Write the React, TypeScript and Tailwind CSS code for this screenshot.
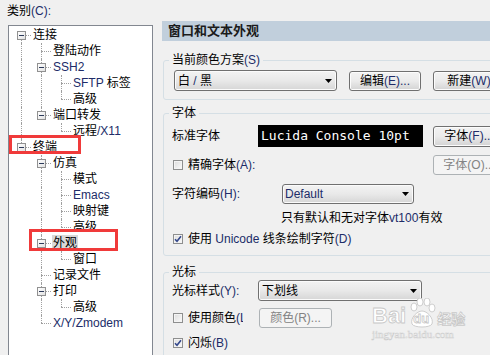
import React from "react";

type N = { label: React.ReactNode; children?: N[]; selected?: boolean };

const L = ({ children }: { children: React.ReactNode }) => (
  <span className="text-[#202c68]">{children}</span>
);

const tree: N[] = [
  {
    label: "连接",
    children: [
      { label: "登陆动作" },
      {
        label: <L>SSH2</L>,
        children: [
          {
            label: (
              <>
                <L>SFTP</L> 标签
              </>
            ),
          },
          { label: "高级" },
        ],
      },
      {
        label: "端口转发",
        children: [
          {
            label: (
              <>
                远程<L>/X11</L>
              </>
            ),
          },
        ],
      },
    ],
  },
  {
    label: "终端",
    children: [
      {
        label: "仿真",
        children: [
          { label: "模式" },
          { label: <L>Emacs</L> },
          { label: "映射键" },
          { label: "高级" },
        ],
      },
      { label: "外观", selected: true, children: [{ label: "窗口" }] },
      { label: "记录文件" },
      { label: "打印", children: [{ label: "高级" }] },
      { label: <L>X/Y/Zmodem</L> },
    ],
  },
];

type Row = { node: N; depth: number; last: boolean; ancLast: boolean[]; first: boolean };

function flat(nodes: N[], depth: number, ancLast: boolean[], out: Row[]) {
  nodes.forEach((n, i) => {
    const last = i === nodes.length - 1;
    out.push({ node: n, depth, last, ancLast, first: depth === 0 && i === 0 });
    if (n.children) flat(n.children, depth + 1, [...ancLast, last], out);
  });
  return out;
}

const rows = flat(tree, 0, [], []);

const dot = "border-dotted border-[#a0a0a0]";

function TreeRow({ r }: { r: Row }) {
  const has = !!r.node.children;
  return (
    <div className="flex h-4 items-center">
      {r.ancLast.map((al, i) => (
        <div key={i} className="relative h-4 w-5 shrink-0">
          {!al && <div className={`absolute left-[10px] top-0 h-4 border-l ${dot}`} />}
        </div>
      ))}
      <div className="relative h-4 w-5 shrink-0">
        {!r.first && <div className={`absolute left-[10px] top-0 h-[8px] border-l ${dot}`} />}
        {!r.last && <div className={`absolute left-[10px] top-[8px] h-[8px] border-l ${dot}`} />}
        <div className={`absolute left-[10px] top-[8px] w-[10px] border-t ${dot}`} />
        {has && (
          <div className="absolute left-[6px] top-[4px] flex h-[9px] w-[9px] items-center justify-center border border-[#919191] bg-linear-to-br from-white to-[#e2e2e2]">
            <div className="h-px w-[5px] bg-[#2c3a5a]" />
          </div>
        )}
      </div>
      <span
        className={`ml-[1px] whitespace-nowrap px-[1px] text-[12px] leading-4 text-black ${
          r.node.selected ? "bg-[#d9d9d9]" : ""
        }`}
      >
        {r.node.label}
      </span>
    </div>
  );
}

function Arrow() {
  return (
    <svg width="7" height="4" viewBox="0 0 7 4" className="shrink-0">
      <path d="M0 0H7L3.5 4Z" fill="#000" />
    </svg>
  );
}

function Combo({ w, text, pl = 3 }: { w: string; text: React.ReactNode; pl?: number }) {
  return (
    <div
      className={`${w} flex h-full items-center justify-between rounded-[3px] border border-[#707070] bg-linear-to-b from-[#f3f3f3] via-[#e9e9e9] to-[#d6d6d6] pr-[4px] shadow-[inset_0_0_0_1px_#fbfbfb] ${
        pl === 2 ? "pl-[2px]" : "pl-[3px]"
      }`}
    >
      <span className="text-[12px] leading-4 whitespace-nowrap">{text}</span>
      <Arrow />
    </div>
  );
}

function Btn({ children, disabled, w = "w-[72px]" }: { children: React.ReactNode; disabled?: boolean; w?: string }) {
  return disabled ? (
    <div
      className={`${w} flex h-full shrink-0 items-center justify-center rounded-[3px] border border-[#adb2b5] bg-[#f4f4f4] text-[12px] leading-4 whitespace-nowrap text-[#838383]`}
    >
      {children}
    </div>
  ) : (
    <div
      className={`${w} flex h-full shrink-0 items-center justify-center rounded-[3px] border border-[#707070] bg-linear-to-b from-[#f3f3f3] via-[#ebebeb] to-[#d3d3d3] text-[12px] leading-4 whitespace-nowrap shadow-[inset_0_0_0_1px_#fcfcfc]`}
    >
      {children}
    </div>
  );
}

function Check({ checked }: { checked?: boolean }) {
  return (
    <div className="relative h-[10px] w-[10px] shrink-0 border border-[#8e8f8f] bg-linear-to-br from-[#dcdcdc] to-[#fbfbfb] shadow-[inset_0_0_0_1px_#f4f4f4]">
      {checked && (
        <svg width="8" height="8" viewBox="0 0 8 8" className="absolute left-0 top-0">
          <path d="M1 4.2L3 6.3L7 1.2" fill="none" stroke="#34488c" strokeWidth="1.6" />
        </svg>
      )}
    </div>
  );
}

export default function App() {
  return (
    <div className="relative flex h-[355px] w-[490px] overflow-hidden bg-[#f0f0f0] text-black [font-family:'Liberation_Sans','Noto_Sans_CJK_SC',sans-serif]">
      {/* left column */}
      <div className="flex w-[162px] shrink-0 flex-col">
        <div className="pl-[7px] pt-[3px] text-[12px] leading-4">
          类别<L>(C):</L>
        </div>
        <div className="ml-[8px] mt-[6px] h-[340px] w-[145px] shrink-0 border border-[#828790] bg-white pl-[2px] pt-[1px]">
          {rows.map((r, i) => (
            <TreeRow key={i} r={r} />
          ))}
        </div>
      </div>

      {/* right column */}
      <div className="flex w-[345px] shrink-0 flex-col pt-[21px]">
        <div className="h-[20px] bg-[#c1cfdc] pl-[6px] text-[13px] font-bold leading-[20px] text-[#1b1b1b]">
          窗口和文本外观
        </div>

        {/* group 1 */}
        <fieldset className="ml-[1px] mt-[11px] min-w-0 rounded-[3px] border border-[#d5dfe5] pb-[8px] pl-[8px] pt-[2px]">
          <legend className="-ml-[3px] px-[3px] text-[12px] leading-4">
            当前颜色方案<L>(S)</L>
          </legend>
          <div className="flex h-[21px] items-center">
            <div className="ml-[2px] h-[21px]">
              <Combo
                w="w-[163px]"
                text={
                  <>
                    白 <L>/</L> 黑
                  </>
                }
              />
            </div>
            <div className="ml-[12px] h-[20px]">
              <Btn>
                编辑<L>(E)...</L>
              </Btn>
            </div>
            <div className="ml-[12px] h-[20px]">
              <Btn>
                新建<L>(W)</L>
              </Btn>
            </div>
          </div>
        </fieldset>

        {/* group 2 */}
        <fieldset className="ml-[1px] mt-[5px] min-w-0 rounded-[3px] border border-[#d5dfe5] pb-[8px] pl-[8px] pt-[4px]">
          <legend className="-ml-[3px] px-[3px] text-[12px] leading-4">字体</legend>
          <div className="flex h-[22px] items-center">
            <span className="w-[86px] shrink-0 text-[12px] leading-4">标准字体</span>
            <div className="flex h-[22px] w-[165px] shrink-0 items-center bg-black pl-[3px] text-[13px] leading-4 whitespace-nowrap text-white [font-family:'DejaVu_Sans_Mono',monospace]">
              Lucida Console 10pt
            </div>
            <div className="ml-[10px] h-[21px]">
              <Btn>
                字体<L>(F)...</L>
              </Btn>
            </div>
          </div>
          <div className="mt-[8px] flex h-[20px] items-center">
            <div className="flex w-[261px] shrink-0 items-center">
              <div className="ml-[1px]">
                <Check />
              </div>
              <span className="ml-[5px] text-[12px] leading-4">
                精确字体<L>(A):</L>
              </span>
            </div>
            <div className="h-[20px]">
              <Btn disabled>字体(O)...</Btn>
            </div>
          </div>
          <div className="mt-[9px] flex h-[20px] items-center">
            <span className="w-[110px] shrink-0 text-[12px] leading-4">
              字符编码<L>(H):</L>
            </span>
            <div className="h-[20px]">
              <Combo w="w-[132px]" pl={2} text={<L>Default</L>} />
            </div>
          </div>
          <div className="mt-[6px] h-4 pl-[109px] text-[12px] leading-4 whitespace-nowrap">
            只有默认和无对字体<L>vt100</L>有效
          </div>
          <div className="mt-[5px] flex h-4 items-center">
            <div className="ml-[1px]">
              <Check checked />
            </div>
            <span className="ml-[5px] text-[12px] leading-4 whitespace-nowrap">
              使用 <L>Unicode</L> 线条绘制字符<L>(D)</L>
            </span>
          </div>
        </fieldset>

        {/* group 3 */}
        <fieldset className="ml-[1px] mt-[8px] min-w-0 rounded-[3px] border border-[#d5dfe5] pb-[8px] pl-[8px] pt-0">
          <legend className="-ml-[3px] px-[3px] text-[12px] leading-4">光标</legend>
          <div className="flex h-[21px] items-center">
            <span className="w-[86px] shrink-0 text-[12px] leading-4">
              光标样式<L>(Y):</L>
            </span>
            <div className="h-[21px]">
              <Combo w="w-[164px]" text="下划线" />
            </div>
          </div>
          <div className="mt-[7px] flex h-[20px] items-center">
            <div className="flex w-[87px] shrink-0 items-center overflow-hidden">
              <div className="ml-[1px]">
                <Check />
              </div>
              <span className="ml-[5px] w-[55px] overflow-hidden text-[12px] leading-4 whitespace-nowrap">
                使用颜色<L>(L)</L>
              </span>
            </div>
            <div className="h-[20px]">
              <Btn disabled w="w-[73px]">
                颜色(R)...
              </Btn>
            </div>
          </div>
          <div className="mt-[7px] flex h-4 items-center">
            <div className="ml-[1px]">
              <Check checked />
            </div>
            <span className="ml-[5px] text-[12px] leading-4">
              闪烁<L>(B)</L>
            </span>
          </div>
        </fieldset>
      </div>

      {/* red annotation boxes */}
      <div className="pointer-events-none absolute left-[9px] top-[135px] h-[19px] w-[72px] border-[3px] border-[#f03a3a]" />
      <div className="pointer-events-none absolute left-[29px] top-[229px] h-[22px] w-[89px] border-[3px] border-[#f03a3a]" />

      {/* watermark */}
      <div className="pointer-events-none absolute left-[372px] top-[298px] flex flex-col items-start">
        <div className="flex items-end text-white [-webkit-text-stroke:0.8px_#c8c8c8]">
          <span className="text-[22px] font-bold leading-[24px]">Bai</span>
          <div className="relative ml-[2px] h-[30px] w-[28px]">
            <svg width="28" height="30" viewBox="0 0 28 30" className="absolute left-0 top-0">
              <g fill="#fff" stroke="#c8c8c8" strokeWidth="0.9">
                <ellipse cx="6" cy="9" rx="3" ry="4" />
                <ellipse cx="12" cy="4" rx="3" ry="4" />
                <ellipse cx="19" cy="4" rx="3" ry="4" />
                <ellipse cx="24" cy="10" rx="3" ry="4" />
                <path d="M4 26C2 20 9 13 14 13C19 13 26 20 24 26C22 30 6 30 4 26Z" />
              </g>
            </svg>
            <span className="absolute left-[5px] top-[14px] text-[13px] font-bold leading-[14px]">du</span>
          </div>
          <span className="ml-[1px] text-[14px] font-bold leading-[18px]">经验</span>
        </div>
        <span className="text-[11px] leading-[12px] text-white [-webkit-text-stroke:0.5px_#cccccc] [font-family:'Liberation_Serif',serif]">
          jingyan.baidu.com
        </span>
      </div>
    </div>
  );
}
